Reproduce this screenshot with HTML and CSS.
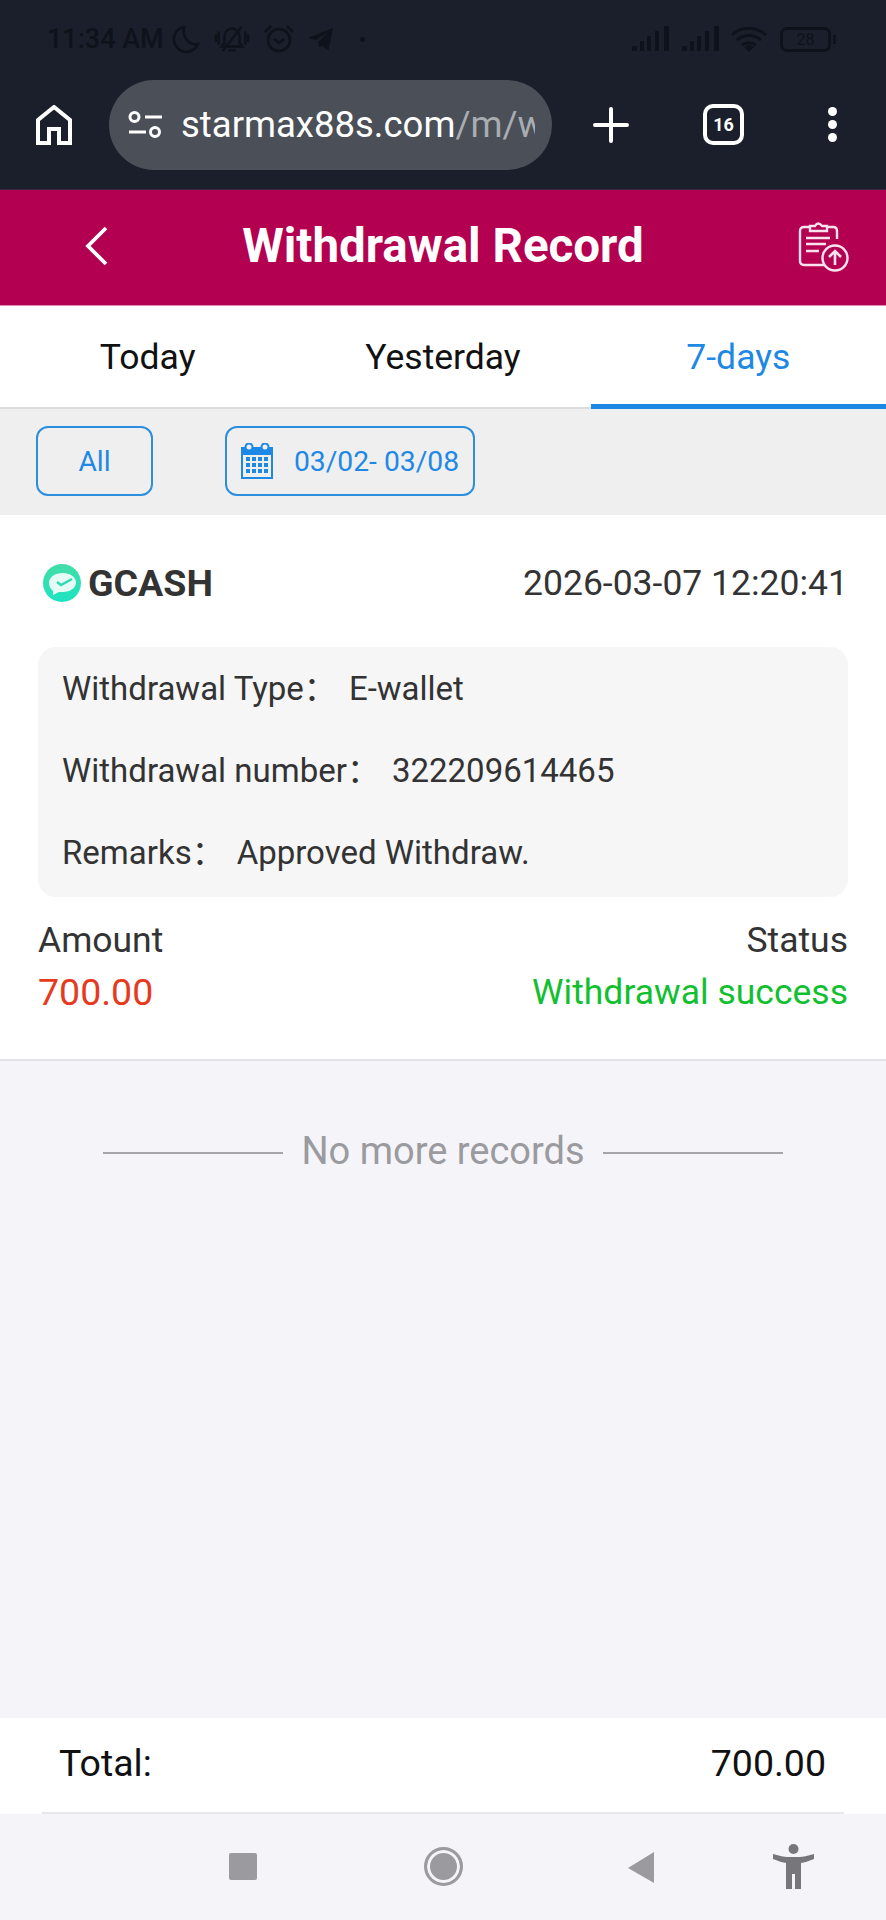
FILE: index.html
```html
<!DOCTYPE html>
<html lang="en">
<head>
    <meta charset="UTF-8">
    <meta name="viewport" content="width=device-width, initial-scale=1.0">
    <title>Withdrawal Record</title>
    <link rel="stylesheet" href="styles.css">
</head>
<body>

<div class="phone">

    <!-- status bar -->
    <div class="status-bar">
        <div class="status-left">
            <span class="status-time">11:34 AM</span>
            <svg class="st-moon" viewBox="0 0 28 28"><path d="M12 2a12.500 12.500 0 1 0 14 17c-8 2-16-6-14-17z" fill="none" stroke="currentColor" stroke-width="2.600"/></svg>
            <svg class="st-bell" viewBox="0 0 38 30"><path d="M19 4c-5 0-8 4-8 9v6l-3 4h22l-3-4v-6c0-5-3-9-8-9zM15 27h8M29 2 9 28M2 10v8M5 7v14M33 7v14M36 10v8" fill="none" stroke="currentColor" stroke-width="2.600"/></svg>
            <svg class="st-alarm" viewBox="0 0 32 30"><circle cx="16" cy="16" r="11" fill="none" stroke="currentColor" stroke-width="2.600"/><path d="M11 15l5 4 5-4M2 8l6-6M30 8l-6-6" fill="none" stroke="currentColor" stroke-width="2.600"/></svg>
            <svg class="st-send" viewBox="0 0 30 28"><path d="M1 13 28 2l-5 24-7-5-3 2-1-6 11-10-14 8z" fill="currentColor"/></svg>
            <span class="st-dot"></span>
        </div>
        <div class="status-right">
            <svg class="st-signal" viewBox="0 0 39 26"><path d="M1 20h5v5H1zM9 15h4v10H9zM16 10h4v15h-4zM24 5h4v20h-4zM33 0h5v25h-5z" fill="currentColor"/></svg>
            <svg class="st-signal" viewBox="0 0 39 26"><path d="M1 20h5v5H1zM9 15h4v10H9zM16 10h4v15h-4zM24 5h4v20h-4zM33 0h5v25h-5z" fill="currentColor"/></svg>
            <svg class="st-wifi" viewBox="0 0 36 26"><path d="M1 9c10-9 24-9 34 0M6 14c7-6 17-6 24 0M11 19c4-3 10-3 14 0" fill="none" stroke="currentColor" stroke-width="3"/><path d="M13 21l5-2 5 2-5 5z" fill="currentColor"/></svg>
            <div class="st-battery"><span>28</span></div>
            <span class="st-nub"></span>
        </div>
    </div>

    <!-- browser toolbar -->
    <div class="browser-bar">
        <svg class="home-icon" viewBox="0 0 36 40"><path d="M2 38V15L18 2l16 13v23H23V24H13v14z" fill="none" stroke="#fff" stroke-width="4"/></svg>
        <div class="url-pill">
            <svg class="tune-icon" viewBox="0 0 34 27"><circle cx="6.500" cy="6" r="4.500" fill="none" stroke="#fff" stroke-width="3"/><circle cx="27" cy="21" r="4.500" fill="none" stroke="#fff" stroke-width="3"/><path d="M17 6h17M1 21h17" stroke="#fff" stroke-width="3"/></svg>
            <div class="url-text">starmax88s.com<span class="url-path">/m/w</span></div>
        </div>
        <svg class="plus-icon" viewBox="0 0 36 36"><path d="M18 2v32M2 18h32" stroke="#fff" stroke-width="4" stroke-linecap="round"/></svg>
        <div class="tab-count">16</div>
        <div class="menu-dots"><span></span><span></span><span></span></div>
    </div>

    <!-- page header -->
    <div class="page-header">
        <svg class="back-icon" viewBox="0 0 24 40"><path d="M21 2 3 20l18 18" fill="none" stroke="#fff" stroke-width="3.800"/></svg>
        <h1>Withdrawal Record</h1>
        <svg class="upload-icon" viewBox="0 0 52 52">
            <path d="M27 45H6q-4 0-4-4V11q0-4 4-4h5M30 7h5q4 0 4 4v8" fill="none" stroke="#fbe3ee" stroke-width="2.400"/>
            <path d="M12 11V6h5q3-5 7 0h5v5z" fill="none" stroke="#fbe3ee" stroke-width="2.400"/>
            <path d="M8 18h24M8 24h20M8 31h13" stroke="#fbe3ee" stroke-width="2.400"/>
            <circle cx="37" cy="38" r="12.500" fill="none" stroke="#fbe3ee" stroke-width="2.400"/>
            <path d="M37 45V31M31 37l6-6 6 6" fill="none" stroke="#fbe3ee" stroke-width="2.600"/>
        </svg>
    </div>

    <!-- day tabs -->
    <div class="tabs">
        <div class="tab">Today</div>
        <div class="tab">Yesterday</div>
        <div class="tab active">7-days</div>
    </div>

    <!-- filters -->
    <div class="filters">
        <div class="filter-btn filter-all">All</div>
        <div class="filter-btn filter-date">
            <svg class="calendar-icon" viewBox="0 0 32 36">
                <path d="M0 4h32v32H0z" fill="#1e88e5"/>
                <path d="M2 12h28v22H2z" fill="#efefef"/>
                <circle cx="8" cy="4" r="3.500" fill="#efefef" stroke="#1e88e5" stroke-width="2"/>
                <circle cx="24" cy="4" r="3.500" fill="#efefef" stroke="#1e88e5" stroke-width="2"/>
                <path d="M5 14h4v4H5zM11 14h4v4h-4zM17 14h4v4h-4zM23 14h4v4h-4zM5 20h4v4H5zM11 20h4v4h-4zM17 20h4v4h-4zM23 20h4v4h-4zM5 26h4v4H5zM11 26h4v4h-4zM17 26h4v4h-4zM23 26h4v4h-4z" fill="#1e88e5"/>
            </svg>
            <span>03/02- 03/08</span>
        </div>
    </div>

    <!-- records -->
    <div class="record-list">
        <div class="record-card">
            <div class="record-top">
                <div class="record-brand">
                    <svg class="gcash-logo" viewBox="0 0 38 38">
                        <defs>
                            <linearGradient id="gcashFill" x1="0" y1="0" x2="0" y2="1">
                                <stop offset="0" stop-color="#45dca6"/>
                                <stop offset="1" stop-color="#1de4c2"/>
                            </linearGradient>
                        </defs>
                        <circle cx="19" cy="19" r="19" fill="url(#gcashFill)"/>
                        <path d="M20 9C12 9 6 13 6 19c0 4 2 6 4 8l0 4 6-3h4c7 0 13-4 13-9.500S27 9 20 9z" fill="#e6fbf5"/>
                        <path d="M14 18l4 3 11-6" fill="none" stroke="#2bdcb0" stroke-width="2.400"/>
                    </svg>
                    <span>GCASH</span>
                </div>
                <div class="record-time">2026-03-07 12:20:41</div>
            </div>
            <div class="record-info">
                <div class="info-row"><span class="info-label">Withdrawal Type：</span>E-wallet</div>
                <div class="info-row"><span class="info-label">Withdrawal number：</span>322209614465</div>
                <div class="info-row"><span class="info-label">Remarks：</span>Approved Withdraw.</div>
            </div>
            <div class="record-bottom">
                <div>
                    <div class="bottom-label">Amount</div>
                    <div class="amount">700.00</div>
                </div>
                <div class="bottom-right">
                    <div class="bottom-label">Status</div>
                    <div class="status-ok">Withdrawal success</div>
                </div>
            </div>
        </div>

        <div class="no-more">
            <span class="no-more-line"></span>
            <span>No more records</span>
            <span class="no-more-line"></span>
        </div>
    </div>

    <!-- total -->
    <div class="total-bar">
        <div class="total-inner">
            <span>Total:</span>
            <span>700.00</span>
        </div>
    </div>

    <!-- android nav -->
    <div class="nav-bar">
        <span class="nav-square"></span>
        <span class="nav-circle"></span>
        <svg class="nav-back" viewBox="0 0 27 31"><path d="M27 0v31L1 16z" fill="#9a9a9f"/></svg>
        <svg class="nav-person" viewBox="0 0 41 46">
            <circle cx="20.500" cy="6" r="5" fill="#77777b"/>
            <path d="M0 11q10 3 14 3h13q4 0 14-3v5q-7 3-13 4v26h-6V31h-3v15h-6V20q-6-1-13-4z" fill="#77777b"/>
        </svg>
    </div>

</div>

</body>
</html>
```

FILE: styles.css
```css
* {
    box-sizing: border-box;
}
body {
    margin: 0;
    font-family: Roboto, "Noto Sans CJK SC", sans-serif;
    background-color: #f4f4f9;
}
.phone {
    display: flex;
    flex-direction: column;
    width: 886px;
    height: 1920px;
    overflow: hidden;
}

/* status bar */
.status-bar {
    display: flex;
    justify-content: space-between;
    align-items: center;
    height: 78px;
    padding: 0 47px;
    background-color: #1a1f2b;
    color: #0e121a;
}
.status-left, .status-right {
    display: flex;
    align-items: center;
}
.status-time {
    width: 125px;
    font-size: 27px;
    font-weight: 500;
}
.st-moon {
    width: 28px;
    height: 28px;
}
.st-bell {
    width: 36px;
    height: 30px;
    margin-left: 14px;
}
.st-alarm {
    width: 32px;
    height: 30px;
    margin-left: 13px;
}
.st-send {
    width: 28px;
    height: 26px;
    margin-left: 12px;
}
.st-dot {
    width: 5px;
    height: 5px;
    margin-left: 25px;
    border-radius: 50%;
    background-color: currentColor;
}
.status-right {
    margin-right: 3px;
}
.st-signal {
    width: 39px;
    height: 26px;
    margin-right: 11px;
}
.st-wifi {
    width: 36px;
    height: 26px;
    margin-right: 13px;
}
.st-battery {
    display: flex;
    justify-content: center;
    align-items: center;
    width: 51px;
    height: 25px;
    border: 3px solid currentColor;
    border-radius: 7px;
    font-size: 16px;
}
.st-nub {
    width: 3px;
    height: 9px;
    margin-left: 2px;
    background-color: currentColor;
}

/* browser toolbar */
.browser-bar {
    display: flex;
    align-items: center;
    height: 112px;
    padding-bottom: 18px;
    background-color: #1a1f2b;
    border-bottom: 1px solid #3a2a45;
}
.home-icon {
    width: 36px;
    height: 40px;
    margin-left: 36px;
}
.url-pill {
    display: flex;
    align-items: center;
    width: 443px;
    height: 90px;
    margin-left: 37px;
    padding-left: 19px;
    border-radius: 45px;
    background-color: #4a4f58;
}
.tune-icon {
    flex-shrink: 0;
    width: 34px;
    height: 27px;
}
.url-text {
    width: 354px;
    margin-left: 19px;
    font-size: 36.5px;
    color: #fff;
    white-space: nowrap;
    overflow: hidden;
}
.url-path {
    color: #a9adb2;
}
.plus-icon {
    width: 36px;
    height: 36px;
    margin-left: 41px;
}
.tab-count {
    display: flex;
    justify-content: center;
    align-items: center;
    width: 41px;
    height: 41px;
    margin-left: 74px;
    border: 4px solid #fff;
    border-radius: 10px;
    color: #fff;
    font-size: 18px;
    font-weight: 700;
}
.menu-dots {
    display: flex;
    flex-direction: column;
    gap: 4px;
    margin-left: 84px;
}
.menu-dots span {
    width: 9px;
    height: 9px;
    border-radius: 50%;
    background-color: #fff;
}

/* page header */
.page-header {
    display: grid;
    grid-template-columns: 1fr auto 1fr;
    align-items: center;
    height: 116px;
    padding: 0 36px 3px 85px;
    background-color: #b30050;
    border-bottom: 1px solid #e58ab5;
}
.back-icon {
    width: 24px;
    height: 40px;
}
.page-header h1 {
    margin: 0 49px 0 0;
    color: #fff;
    font-size: 47.5px;
    font-weight: 700;
}
.upload-icon {
    justify-self: end;
    width: 52px;
    height: 52px;
}

/* day tabs */
.tabs {
    display: flex;
    height: 103px;
    background-color: #fff;
}
.tab {
    display: flex;
    flex: 1;
    justify-content: center;
    align-items: center;
    border-bottom: 2px solid #dcdcdc;
    color: #111;
    font-size: 35.5px;
}
.tab.active {
    border-bottom: 5px solid #1e88e5;
    color: #1e88e5;
    padding-top: 3px;
}

/* filters */
.filters {
    display: flex;
    align-items: center;
    gap: 72px;
    height: 106px;
    padding: 0 0 2px 36px;
    background-color: #efefef;
}
.filter-btn {
    display: flex;
    justify-content: center;
    align-items: center;
    height: 70px;
    border: 2px solid #2b8fdd;
    border-radius: 12px;
    color: #1e88e5;
    font-size: 28.25px;
}
.filter-all {
    width: 117px;
}
.filter-date {
    gap: 21px;
    width: 250px;
}
.calendar-icon {
    width: 32px;
    height: 36px;
}

/* records */
.record-list {
    flex: 1;
    background-color: #f4f4f9;
}
.record-card {
    height: 546px;
    padding: 0 38px;
    background-color: #fff;
    border-bottom: 2px solid #e4e4e8;
}
.record-top {
    display: flex;
    justify-content: space-between;
    align-items: center;
    height: 132px;
    padding-top: 4px;
}
.record-brand {
    display: flex;
    align-items: center;
    gap: 7px;
    padding-left: 5px;
    color: #333;
    font-size: 37.5px;
    font-weight: 700;
}
.gcash-logo {
    width: 38px;
    height: 38px;
}
.record-time {
    color: #333;
    font-size: 35.5px;
}
.record-info {
    display: flex;
    flex-direction: column;
    justify-content: space-between;
    height: 250px;
    padding: 22px 24px 24px;
    border-radius: 18px;
    background-color: #f6f6f7;
    color: #333;
    font-size: 33px;
}
.info-row {
    line-height: 40px;
}
.info-label {
    margin-right: 12px;
}
.record-bottom {
    display: flex;
    justify-content: space-between;
    padding-top: 23px;
    font-size: 35.5px;
}
.bottom-label {
    margin-bottom: 12px;
    color: #333;
    line-height: 40px;
}
.bottom-right {
    text-align: right;
}
.amount {
    color: #e63a1f;
    font-size: 37.5px;
    line-height: 40px;
}
.status-ok {
    color: #12bf30;
    line-height: 40px;
}
.no-more {
    display: flex;
    justify-content: center;
    align-items: center;
    gap: 18px;
    margin-top: 68px;
    color: #9a9a9f;
    font-size: 38px;
}
.no-more-line {
    width: 180px;
    height: 2px;
    margin-top: 4px;
    background-color: #a5a5aa;
}

/* total */
.total-bar {
    height: 96px;
    padding: 0 42px;
    background-color: #fff;
}
.total-inner {
    display: flex;
    justify-content: space-between;
    align-items: center;
    height: 96px;
    padding: 0 18px 4px 17px;
    border-bottom: 2px solid #e8e8ec;
    color: #111;
    font-size: 37.5px;
}

/* android nav */
.nav-bar {
    position: relative;
    flex-shrink: 0;
    height: 106px;
    background-color: #f4f4f9;
}
.nav-square {
    position: absolute;
    left: 229px;
    top: 39px;
    width: 28px;
    height: 27px;
    border-radius: 2px;
    background-color: #9a9a9f;
}
.nav-circle {
    position: absolute;
    left: 424px;
    top: 33px;
    width: 39px;
    height: 39px;
    border: 3px solid #9a9a9f;
    border-radius: 50%;
    background-color: #9a9a9f;
    box-shadow: inset 0 0 0 3px #f4f4f9;
}
.nav-back {
    position: absolute;
    left: 627px;
    top: 38px;
    width: 27px;
    height: 31px;
}
.nav-person {
    position: absolute;
    left: 773px;
    top: 29px;
    width: 41px;
    height: 46px;
}
```
